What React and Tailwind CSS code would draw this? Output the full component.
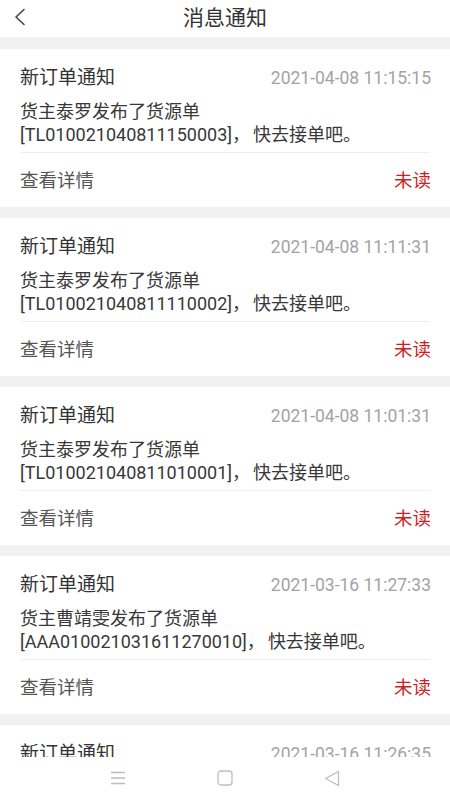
import React from "react";

const items = [
  { time: "2021-04-08 11:15:15", who: "货主泰罗发布了货源单", code: "[TL010021040811150003]，" },
  { time: "2021-04-08 11:11:31", who: "货主泰罗发布了货源单", code: "[TL010021040811110002]，" },
  { time: "2021-04-08 11:01:31", who: "货主泰罗发布了货源单", code: "[TL010021040811010001]，" },
  { time: "2021-03-16 11:27:33", who: "货主曹靖雯发布了货源单", code: "[AAA010021031611270010]，" },
  { time: "2021-03-16 11:26:35", who: "货主曹靖雯发布了货源单", code: "[AAA010021031611260009]，" },
];

function Card({ it }) {
  return (
    <div className="bg-white px-[20px] shrink-0 h-[158px] flex flex-col">
      <div className="pt-[17px] flex items-center justify-between h-[41px]">
        <span className="text-[19px] leading-[24px] text-[#333333]">新订单通知</span>
        <span className="text-[17.5px] leading-[24px] text-[#a3a3a3] -mr-[1px]">{it.time}</span>
      </div>
      <div className="mt-[9.5px] text-[18px] leading-[23px] text-[#383838] h-[46px]">
        <div>{it.who}</div>
        <div className="whitespace-nowrap">
          {it.code}
          <span className="ml-[3px]">快去接单吧。</span>
        </div>
      </div>
      <div className="mt-[6.5px] h-px bg-[#efefef]" />
      <div className="flex-1 flex items-center justify-between pt-[3px]">
        <span className="text-[18.5px] text-[#555555]">查看详情</span>
        <span className="text-[18.5px] text-[#cc1f1f] -mr-[1px]">未读</span>
      </div>
    </div>
  );
}

export default function App() {
  return (
    <div
      className="w-[450px] h-[800px] flex flex-col bg-[#f1f1f1] overflow-hidden"
      style={{ fontFamily: "Roboto, 'Noto Sans CJK SC', sans-serif" }}
    >
      <div className="h-[37px] bg-white relative flex items-center justify-center shrink-0">
        <svg className="absolute left-[13px] top-[8px]" width="14" height="18" viewBox="0 0 14 18" fill="none">
          <path d="M11 1.5 L3 9 L11 16.5" stroke="#444" strokeWidth="1.6" strokeLinecap="round" strokeLinejoin="round" />
        </svg>
        <span className="text-[21px] text-[#333333] leading-none">消息通知</span>
      </div>
      <div className="flex-1 overflow-hidden flex flex-col gap-[11px] pt-[12px]">
        {items.map((it, i) => (
          <Card key={i} it={it} />
        ))}
      </div>
      <div className="h-[43px] bg-white shrink-0 flex items-center justify-center gap-[91px] pb-[1px]">
        <svg width="16" height="14" viewBox="0 0 16 14" fill="none">
          <path d="M1 1.5H15M1 7H15M1 12.5H15" stroke="#bdbdbd" strokeWidth="1.3" />
        </svg>
        <svg width="16" height="16" viewBox="0 0 16 16" fill="none">
          <rect x="1" y="1" width="14" height="14" rx="3" stroke="#bdbdbd" strokeWidth="1.3" />
        </svg>
        <svg width="16" height="17" viewBox="0 0 16 17" fill="none">
          <path d="M14.5 1.5 L1.5 8.5 L14.5 15.5 Z" stroke="#bdbdbd" strokeWidth="1.3" strokeLinejoin="round" />
        </svg>
      </div>
    </div>
  );
}
